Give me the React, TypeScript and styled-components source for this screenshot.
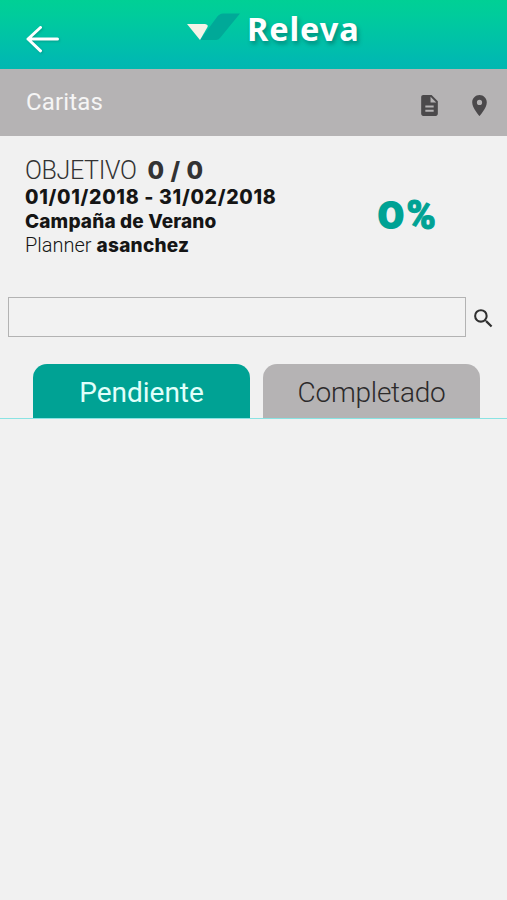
import React from "react";
import styled, { createGlobalStyle } from "styled-components";
import { MdDescription, MdLocationOn, MdSearch } from "react-icons/md";

const GlobalStyle = createGlobalStyle`
  * { box-sizing: border-box; }
  body { margin: 0; background: #f1f1f1; font-family: Roboto, "Liberation Sans", sans-serif; }
  button { border: 0; margin: 0; padding: 0; background: none; font: inherit; color: inherit; }
`;

const Screen = styled.main`
  display: flex;
  flex-direction: column;
  width: 100%;
  min-height: 100vh;
  background: #f1f1f1;
  color: #151515;
`;

const Header = styled.header`
  display: grid;
  grid-template-columns: 187px auto;
  height: 69px;
  background: linear-gradient(#00d095 0%, #00cc9c 22%, #00b9b1 88%, #00b8b0 100%);
`;

const BackButton = styled.button`
  display: flex;
  align-items: flex-start;
  padding: 23px 0 0 24px;
  svg { filter: drop-shadow(1px 1px 1px rgba(0, 80, 80, 0.3)); }
`;

const Brand = styled.div`
  display: flex;
  align-items: flex-start;
  gap: 6px;
  padding-top: 6px;
  svg { flex: none; margin-top: 6px; }
`;

const BrandName = styled.span`
  font: 700 32.5px/46px "Noto Sans", sans-serif;
  letter-spacing: 0.9px;
  color: #fff;
  text-shadow: 2px 3px 4px rgba(0, 70, 70, 0.45);
`;

const ClientBar = styled.div`
  display: flex;
  justify-content: space-between;
  height: 67px;
  padding: 0 15px 0 26px;
  background: #b5b3b4;
`;

const Run = styled.span<{ $size: number; $weight?: number; $track?: number; $bold?: boolean; $color?: string }>`
  font-family: ${(p) => (p.$bold ? "Inter" : "Roboto")}, sans-serif;
  font-size: ${(p) => p.$size}px;
  font-weight: ${(p) => p.$weight ?? 400};
  letter-spacing: ${(p) => p.$track ?? 0}px;
  color: ${(p) => p.$color ?? "inherit"};
  white-space: pre;
`;

const ClientName = styled.h1`
  margin: 0;
  font-size: 24px;
  line-height: 66px;
`;

const Actions = styled.div`
  display: flex;
  align-items: flex-start;
  gap: 25px;
  padding-top: 24px;
  color: #4b494b;
`;

const Summary = styled.section`
  display: flex;
  justify-content: space-between;
  height: 161px;
  padding: 21px 71px 0 25px;
`;

const Line = styled.div<{ $height: number; $gap?: number }>`
  display: flex;
  align-items: baseline;
  gap: ${(p) => p.$gap ?? 0}px;
  height: ${(p) => p.$height}px;
  line-height: ${(p) => p.$height}px;
`;

const Percent = styled.div`
  padding-top: 34px;
  line-height: 48px;
  color: #00a294;
`;

const PercentSign = styled(Run)`
  -webkit-text-stroke: 1px #00a294;
`;

const SearchRow = styled.form`
  display: flex;
  align-items: center;
  gap: 5px;
  height: 40px;
  padding-left: 8px;
`;

const SearchInput = styled.input`
  width: 458px;
  height: 40px;
  border: 1px solid #b3b3b3;
  border-radius: 0;
  background: #f2f2f2;
  outline: 0;
`;

const SearchButton = styled.button`
  display: flex;
  color: #303030;
  padding-top: 2px;
`;

const Tabs = styled.nav`
  display: flex;
  gap: 13px;
  margin-top: 27px;
  padding-left: 33px;
  border-bottom: 1px solid #8ae3e3;
`;

const Tab = styled.button<{ $active?: boolean }>`
  width: 217px;
  height: 54px;
  padding-top: 4px;
  border-radius: 14px 14px 0 0;
  background: ${(p) => (p.$active ? "#00a294" : "#b5b3b4")};
  color: ${(p) => (p.$active ? "#e0fffa" : "#2c2a2b")};
  line-height: 50px;
`;

export default function App() {
  return (
    <>
      <GlobalStyle />
      <Screen>
        <Header>
          <BackButton aria-label="Volver">
            <svg width="38" height="34" viewBox="0 0 38 34" fill="none" stroke="#fff" strokeWidth="3" strokeLinecap="round" strokeLinejoin="round">
              <path d="M33.5 16H4M16.5 4.5L4 16L16.5 27.8" />
            </svg>
          </BackButton>
          <Brand>
            <svg width="54" height="30" viewBox="0 0 54 30">
              <path d="M36 1.5H53L33 26Q31.500 28 29 28H13L30 5Q32.500 1.500 36 1.500Z" fill="#00a998" />
              <path d="M0 12H18Q21.500 12.500 20.500 15L13 28Z" fill="#f5f3e8" />
            </svg>
            <BrandName>Releva</BrandName>
          </Brand>
        </Header>
        <ClientBar>
          <ClientName><Run $size={24} $track={0.15} $color="#f5f5f5">Caritas</Run></ClientName>
          <Actions>
            <MdDescription size={25} />
            <MdLocationOn size={25} />
          </Actions>
        </ClientBar>
        <Summary>
          <div>
            <Line $height={28} $gap={11}>
              <Run $size={25} $weight={300} $track={-0.35} $color="#333">OBJETIVO</Run>
              <Run $size={24} $weight={800} $bold $track={0.6} $color="#333">0 / 0</Run>
            </Line>
            <Line $height={24}><Run $size={19.5} $weight={800} $bold $track={0.7}>01/01/2018 - 31/02/2018</Run></Line>
            <Line $height={25}><Run $size={19} $weight={800} $bold $track={0.15}>Campaña de Verano</Run></Line>
            <Line $height={22} $gap={5}>
              <Run $size={20} $weight={300}>Planner</Run>
              <Run $size={19} $weight={800} $bold $track={0.25}>asanchez</Run>
            </Line>
          </div>
          <Percent>
            <Run $size={39} $weight={900} $bold $track={1.5}>0</Run>
            <PercentSign $size={40} $weight={900}>%</PercentSign>
          </Percent>
        </Summary>
        <SearchRow>
          <SearchInput aria-label="Buscar" />
          <SearchButton type="button" aria-label="Buscar"><MdSearch size={25} /></SearchButton>
        </SearchRow>
        <Tabs>
          <Tab $active><Run $size={28}>Pendiente</Run></Tab>
          <Tab><Run $size={28} $weight={300} $track={-0.25}>Completado</Run></Tab>
        </Tabs>
      </Screen>
    </>
  );
}
